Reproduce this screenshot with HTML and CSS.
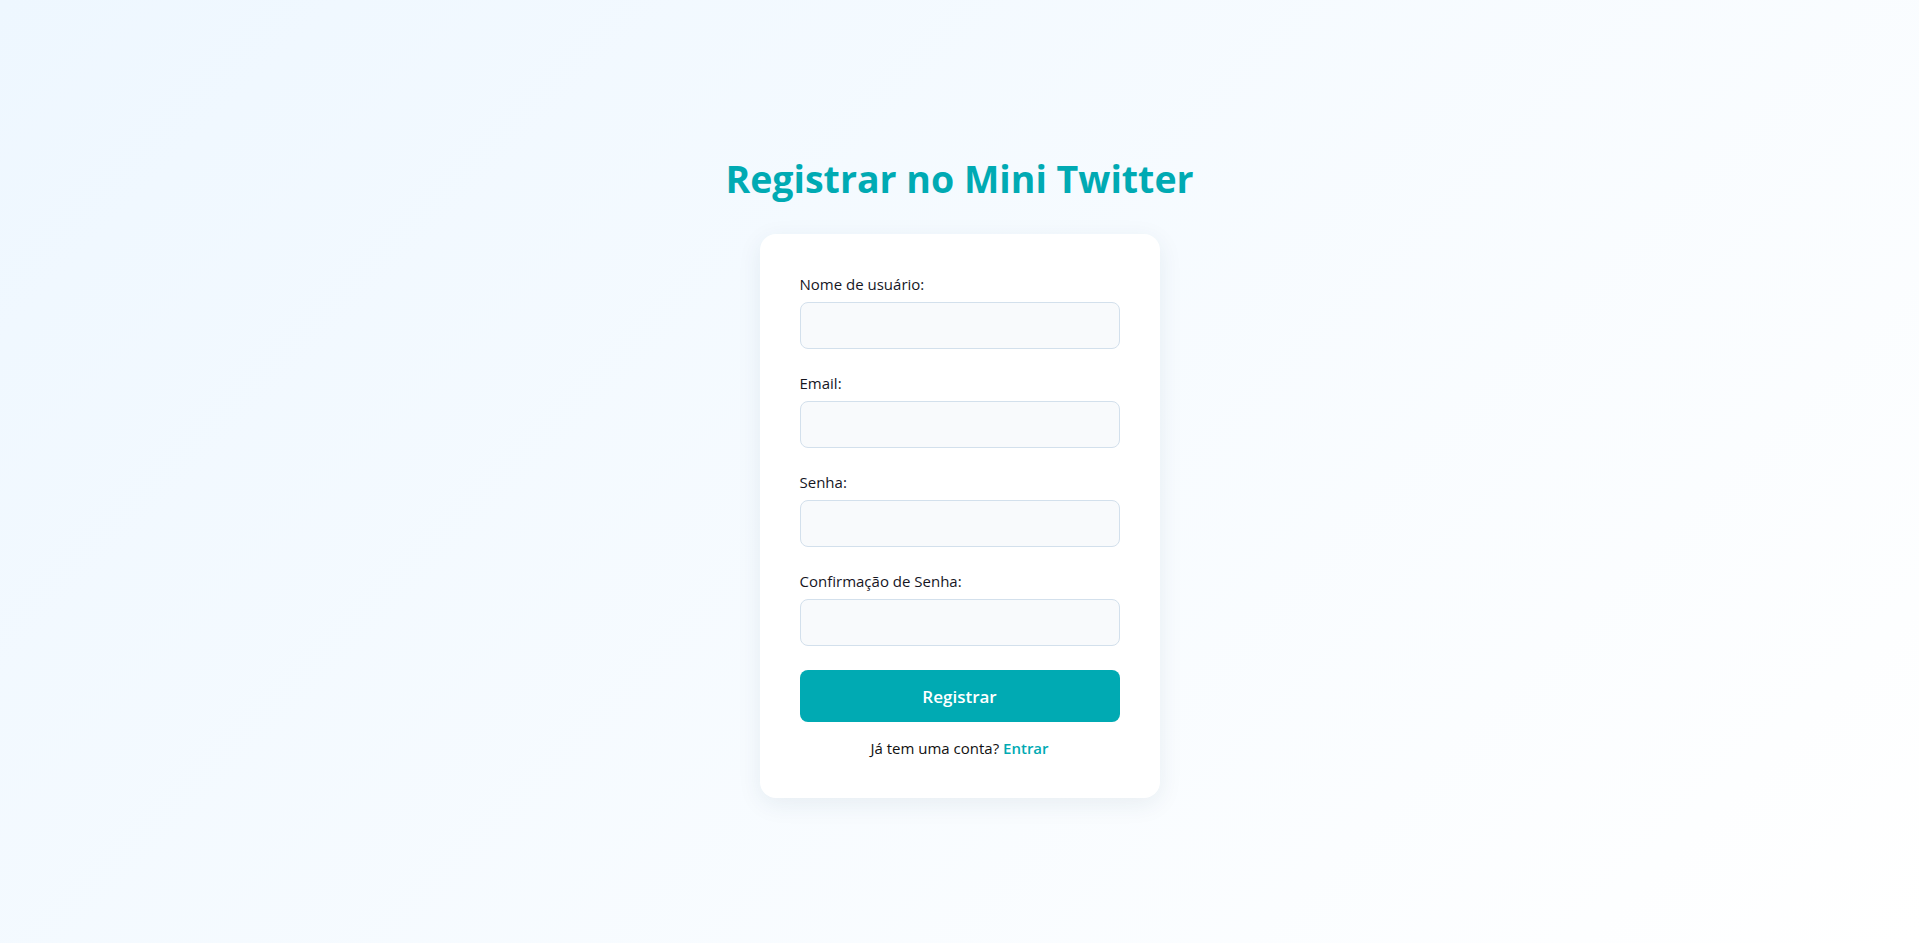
FILE: index.html
```html
<!DOCTYPE html>
<html lang="pt-BR">
<head>
<meta charset="utf-8">
<title>Registrar - Mini Twitter</title>
<link rel="stylesheet" href="styles.css">
</head>
<body>
<main class="page">
  <h1 class="title">Registrar no Mini Twitter</h1>
  <form class="card">
    <div class="field">
      <label class="label" for="username">Nome de usuário:</label>
      <input class="input" id="username" type="text">
    </div>
    <div class="field">
      <label class="label" for="email">Email:</label>
      <input class="input" id="email" type="email">
    </div>
    <div class="field">
      <label class="label" for="password">Senha:</label>
      <input class="input" id="password" type="password">
    </div>
    <div class="field">
      <label class="label" for="password2">Confirmação de Senha:</label>
      <input class="input" id="password2" type="password">
    </div>
    <button class="btn" type="button">Registrar</button>
    <p class="foot">Já tem uma conta? <a class="link" href="#">Entrar</a></p>
  </form>
</main>
</body>
</html>
```
FILE: styles.css
```css
* { box-sizing: border-box; }
html, body { margin: 0; padding: 0; }
body {
  font-family: "Open Sans", "Noto Sans", sans-serif;
  background: linear-gradient(135deg, #eef7ff 0%, #ffffff 100%);
  min-height: 100vh;
  color: #1a1a2e;
}
.page {
  min-height: 100vh;
  padding-top: 8px;
  display: flex;
  flex-direction: column;
  align-items: center;
  justify-content: center;
}
.title {
  margin: 0 0 29.5px;
  font-size: 37.5px;
  line-height: 52px;
  font-weight: 700;
  color: #00aab3;
}
.card {
  width: 400px;
  background: #ffffff;
  border-radius: 16px;
  padding: 40px;
  box-shadow: 0 6px 24px rgba(30, 60, 90, 0.08);
  display: flex;
  flex-direction: column;
}
.field {
  display: flex;
  flex-direction: column;
  margin-bottom: 24px;
}
.label {
  font-size: 15px;
  line-height: 20px;
  margin-bottom: 8px;
  color: #16161f;
}
.input {
  height: 47px;
  border: 1px solid #d3e0ec;
  border-radius: 8px;
  background: #f8fafc;
  padding: 0 12px;
  font: inherit;
  font-size: 15px;
  outline: none;
}
.btn {
  height: 52px;
  border: none;
  border-radius: 8px;
  background: #00aab3;
  color: #ffffff;
  font-family: inherit;
  font-size: 17px;
  font-weight: 600;
  cursor: pointer;
}
.foot {
  margin: 16px 0 0;
  text-align: center;
  font-size: 15px;
  line-height: 20px;
  color: #111;
}
.link {
  color: #00aab3;
  text-decoration: none;
  font-weight: 600;
}
```
